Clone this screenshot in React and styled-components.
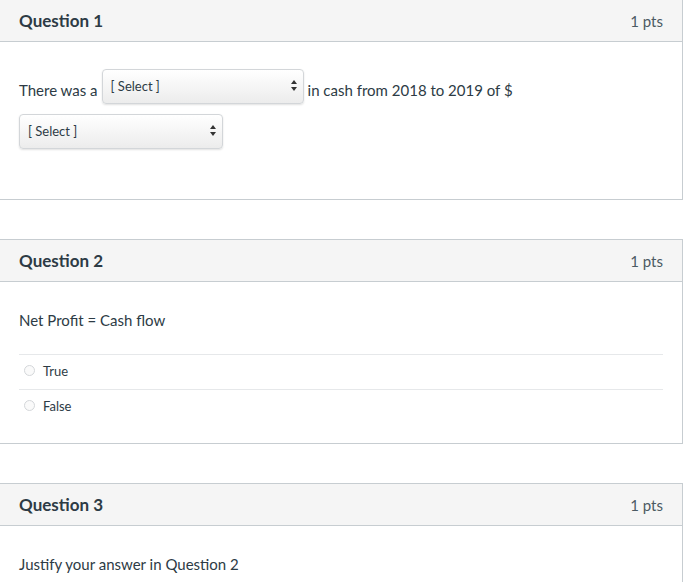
import styled, { createGlobalStyle } from 'styled-components';

const Global = createGlobalStyle`
    body {
        margin: 0;
        background: #fff;
        font-family: Lato, "Open Sans", "Liberation Sans", sans-serif;
        color: #2d3b45;
    }
`

const Page = styled.div`
    margin: -1px 0 0 -1px;
    width: 684px;
`

const Card = styled.div`
    border: 1px solid #c7cdd1;
    background: #fff;
    margin-bottom: 39px;
`

const Header = styled.div`
    display: flex;
    justify-content: space-between;
    align-items: center;
    height: 41px;
    padding: 0 19px;
    background: #f5f5f5;
    border-bottom: 1px solid #c7cdd1;
`

const Title = styled.div`
    font-weight: bold;
    font-size: 17px;
    color: #2d3b45;
`

const Pts = styled.div`
    font-size: 15px;
    color: #4c5a63;
`

const Body = styled.div`
    padding: ${p => p.$pad || '27px 19px 0'};
    height: ${p => p.$h}px;
    box-sizing: border-box;
`

const Line = styled.div`
    display: flex;
    align-items: center;
    flex-wrap: wrap;
    font-size: 15px;
    gap: 4px;
    margin-bottom: 10px;
`

const Inline = styled.span`
    padding-top: 6px;
`

const SelectBox = styled.div`
    display: flex;
    align-items: center;
    justify-content: space-between;
    box-sizing: border-box;
    width: ${p => p.$w}px;
    height: 35px;
    padding: 0 6px 2px 8px;
    border: 1px solid #d3d6d9;
    border-radius: 4px;
    background: linear-gradient(#ffffff, #ececec);
    box-shadow: 0 1px 2px rgba(0,0,0,0.12);
    font-size: 13px;
    color: #2d3b45;
`

const Text = styled.div`
    font-size: 15px;
`

const Options = styled.div`
    margin-top: 25px;
    border-top: 1px solid #e6e8ea;
`

const Option = styled.div`
    display: flex;
    align-items: center;
    gap: 8px;
    height: 35px;
    padding: 0 0 3px 5px;
    box-sizing: border-box;
    border-bottom: 1px solid ${p => p.$last ? 'transparent' : '#e6e8ea'};
    font-size: 13px;
`

const Radio = styled.span`
    width: 9px;
    height: 9px;
    border-radius: 50%;
    border: 1px solid #d4d7da;
    background: #fafafa;
`

const Arrows = () => (
    <svg width="6" height="11" viewBox="0 0 6 11">
        <path d="M3 0 L6 4 L0 4 Z" fill="#333" />
        <path d="M0 7 L6 7 L3 11 Z" fill="#333" />
    </svg>
)

const Select = ({ w }) => (
    <SelectBox $w={w}>
        <span>[ Select ]</span>
        <Arrows />
    </SelectBox>
)

const QuestionHeader = ({ n }) => (
    <Header>
        <Title>Question {n}</Title>
        <Pts>1 pts</Pts>
    </Header>
)

export default function App() {
    return (
        <Page>
            <Global />
            <Card>
                <QuestionHeader n={1} />
                <Body $h={157}>
                    <Line>
                        <Inline>There was a</Inline>
                        <Select w={202} />
                        <Inline>in cash from 2018 to 2019 of $</Inline>
                    </Line>
                    <Select w={204} />
                </Body>
            </Card>
            <Card>
                <QuestionHeader n={2} />
                <Body $h={161} $pad="29px 19px 0">
                    <Text>Net Profit = Cash flow</Text>
                    <Options>
                        <Option><Radio />True</Option>
                        <Option $last><Radio />False</Option>
                    </Options>
                </Body>
            </Card>
            <Card>
                <QuestionHeader n={3} />
                <Body $h={80} $pad="29px 19px 0">
                    <Text>Justify your answer in Question 2</Text>
                </Body>
            </Card>
        </Page>
    );
}
